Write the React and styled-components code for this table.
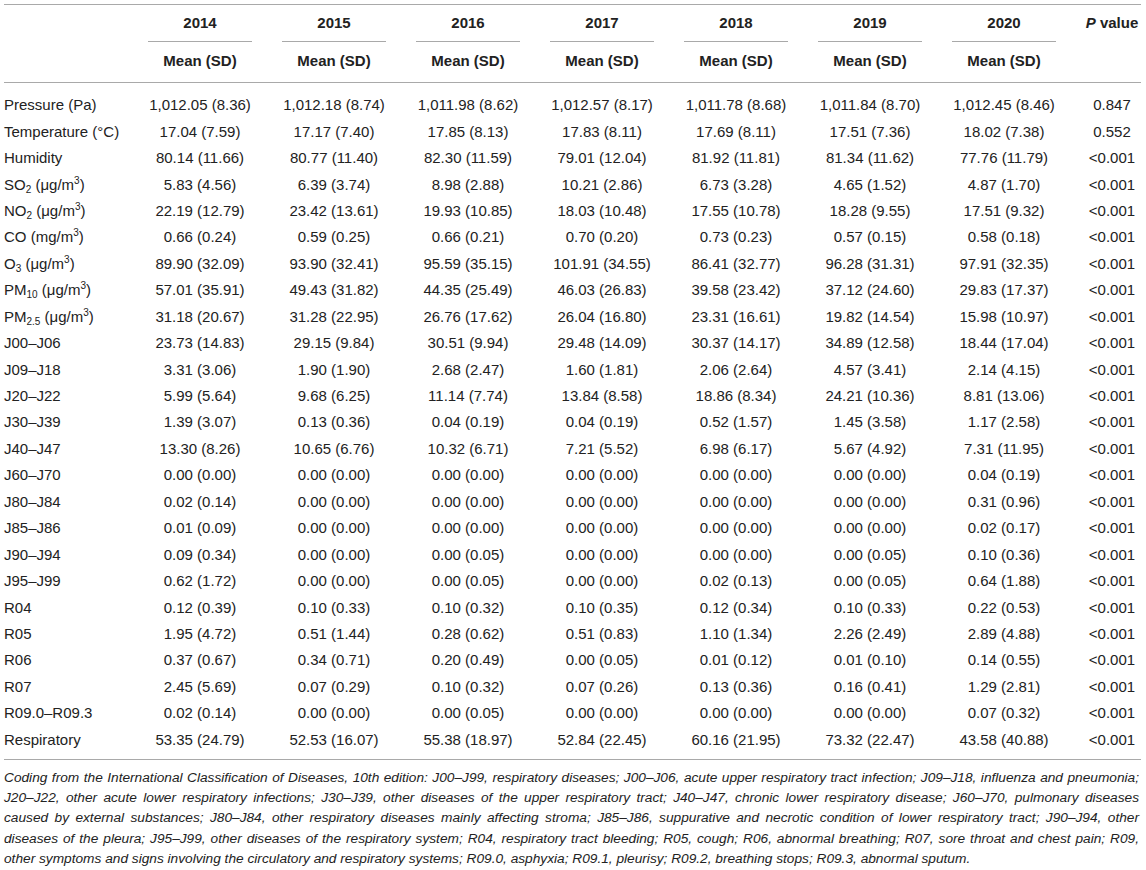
import React from "react";
import styled, { createGlobalStyle } from "styled-components";

const Global = createGlobalStyle`
  html, body { margin: 0; padding: 0; background: #fff; }
  body { font-family: "Liberation Sans", Arial, sans-serif; color: #222; }
`;

const COLS = "129px repeat(7, 134px) 70px";
const LINE = "#a9a9a9";

const Page = styled.div`
  padding: 4px 5px 0 4px;
  width: 1137px;
`;

const Table = styled.div`
  border-top: 1px solid ${LINE};
  border-bottom: 1px solid ${LINE};
`;

const Head = styled.div`
  display: grid;
  grid-template-columns: ${COLS};
  border-bottom: 1px solid ${LINE};
  font-weight: bold;
  font-size: 15px;
  line-height: 18px;
`;

const YearGroup = styled.div`
  display: flex;
  flex-direction: column;
  text-align: center;
`;

const YearLabel = styled.div`
  margin: 0 15px;
  padding: 9px 0;
  border-bottom: 1px solid ${LINE};
`;

const SubLabel = styled.div`
  padding: 10px 0 12px;
`;

const PHead = styled.div`
  padding: 9px 0 0 12px;
  text-align: center;
  white-space: nowrap;
  em { font-style: italic; }
`;

const Body = styled.div`
  padding: 9px 0 6px;
`;

const Row = styled.div`
  display: grid;
  grid-template-columns: ${COLS};
  height: 26.45px;
  align-items: center;
  font-size: 15px;
  line-height: 18px;
`;

const Label = styled.div`
  white-space: nowrap;
  sub {
    font-size: 10px;
    vertical-align: -3px;
    line-height: 0;
  }
  sup {
    font-size: 10px;
    vertical-align: 6px;
    line-height: 0;
  }
`;

const Cell = styled.div`
  text-align: center;
  white-space: nowrap;
`;

const PCell = styled(Cell)`
  padding-left: 12px;
`;

const Notes = styled.div`
  padding: 8px 2px 0 0;
  font-style: italic;
  font-size: 13.7px;
  line-height: 20.25px;
`;

const NoteLine = styled.div`
  text-align: justify;
  text-align-last: ${(p) => (p.$last ? "left" : "justify")};
  white-space: nowrap;
`;

const ug = <>(μg/m<sup>3</sup>)</>;

const rows = [
  [<>Pressure (Pa)</>, ["1,012.05 (8.36)", "1,012.18 (8.74)", "1,011.98 (8.62)", "1,012.57 (8.17)", "1,011.78 (8.68)", "1,011.84 (8.70)", "1,012.45 (8.46)"], "0.847"],
  [<>Temperature (°C)</>, ["17.04 (7.59)", "17.17 (7.40)", "17.85 (8.13)", "17.83 (8.11)", "17.69 (8.11)", "17.51 (7.36)", "18.02 (7.38)"], "0.552"],
  [<>Humidity</>, ["80.14 (11.66)", "80.77 (11.40)", "82.30 (11.59)", "79.01 (12.04)", "81.92 (11.81)", "81.34 (11.62)", "77.76 (11.79)"], "<0.001"],
  [<>SO<sub>2</sub> {ug}</>, ["5.83 (4.56)", "6.39 (3.74)", "8.98 (2.88)", "10.21 (2.86)", "6.73 (3.28)", "4.65 (1.52)", "4.87 (1.70)"], "<0.001"],
  [<>NO<sub>2</sub> {ug}</>, ["22.19 (12.79)", "23.42 (13.61)", "19.93 (10.85)", "18.03 (10.48)", "17.55 (10.78)", "18.28 (9.55)", "17.51 (9.32)"], "<0.001"],
  [<>CO (mg/m<sup>3</sup>)</>, ["0.66 (0.24)", "0.59 (0.25)", "0.66 (0.21)", "0.70 (0.20)", "0.73 (0.23)", "0.57 (0.15)", "0.58 (0.18)"], "<0.001"],
  [<>O<sub>3</sub> {ug}</>, ["89.90 (32.09)", "93.90 (32.41)", "95.59 (35.15)", "101.91 (34.55)", "86.41 (32.77)", "96.28 (31.31)", "97.91 (32.35)"], "<0.001"],
  [<>PM<sub>10</sub> {ug}</>, ["57.01 (35.91)", "49.43 (31.82)", "44.35 (25.49)", "46.03 (26.83)", "39.58 (23.42)", "37.12 (24.60)", "29.83 (17.37)"], "<0.001"],
  [<>PM<sub>2.5</sub> {ug}</>, ["31.18 (20.67)", "31.28 (22.95)", "26.76 (17.62)", "26.04 (16.80)", "23.31 (16.61)", "19.82 (14.54)", "15.98 (10.97)"], "<0.001"],
  [<>J00–J06</>, ["23.73 (14.83)", "29.15 (9.84)", "30.51 (9.94)", "29.48 (14.09)", "30.37 (14.17)", "34.89 (12.58)", "18.44 (17.04)"], "<0.001"],
  [<>J09–J18</>, ["3.31 (3.06)", "1.90 (1.90)", "2.68 (2.47)", "1.60 (1.81)", "2.06 (2.64)", "4.57 (3.41)", "2.14 (4.15)"], "<0.001"],
  [<>J20–J22</>, ["5.99 (5.64)", "9.68 (6.25)", "11.14 (7.74)", "13.84 (8.58)", "18.86 (8.34)", "24.21 (10.36)", "8.81 (13.06)"], "<0.001"],
  [<>J30–J39</>, ["1.39 (3.07)", "0.13 (0.36)", "0.04 (0.19)", "0.04 (0.19)", "0.52 (1.57)", "1.45 (3.58)", "1.17 (2.58)"], "<0.001"],
  [<>J40–J47</>, ["13.30 (8.26)", "10.65 (6.76)", "10.32 (6.71)", "7.21 (5.52)", "6.98 (6.17)", "5.67 (4.92)", "7.31 (11.95)"], "<0.001"],
  [<>J60–J70</>, ["0.00 (0.00)", "0.00 (0.00)", "0.00 (0.00)", "0.00 (0.00)", "0.00 (0.00)", "0.00 (0.00)", "0.04 (0.19)"], "<0.001"],
  [<>J80–J84</>, ["0.02 (0.14)", "0.00 (0.00)", "0.00 (0.00)", "0.00 (0.00)", "0.00 (0.00)", "0.00 (0.00)", "0.31 (0.96)"], "<0.001"],
  [<>J85–J86</>, ["0.01 (0.09)", "0.00 (0.00)", "0.00 (0.00)", "0.00 (0.00)", "0.00 (0.00)", "0.00 (0.00)", "0.02 (0.17)"], "<0.001"],
  [<>J90–J94</>, ["0.09 (0.34)", "0.00 (0.00)", "0.00 (0.05)", "0.00 (0.00)", "0.00 (0.00)", "0.00 (0.05)", "0.10 (0.36)"], "<0.001"],
  [<>J95–J99</>, ["0.62 (1.72)", "0.00 (0.00)", "0.00 (0.05)", "0.00 (0.00)", "0.02 (0.13)", "0.00 (0.05)", "0.64 (1.88)"], "<0.001"],
  [<>R04</>, ["0.12 (0.39)", "0.10 (0.33)", "0.10 (0.32)", "0.10 (0.35)", "0.12 (0.34)", "0.10 (0.33)", "0.22 (0.53)"], "<0.001"],
  [<>R05</>, ["1.95 (4.72)", "0.51 (1.44)", "0.28 (0.62)", "0.51 (0.83)", "1.10 (1.34)", "2.26 (2.49)", "2.89 (4.88)"], "<0.001"],
  [<>R06</>, ["0.37 (0.67)", "0.34 (0.71)", "0.20 (0.49)", "0.00 (0.05)", "0.01 (0.12)", "0.01 (0.10)", "0.14 (0.55)"], "<0.001"],
  [<>R07</>, ["2.45 (5.69)", "0.07 (0.29)", "0.10 (0.32)", "0.07 (0.26)", "0.13 (0.36)", "0.16 (0.41)", "1.29 (2.81)"], "<0.001"],
  [<>R09.0–R09.3</>, ["0.02 (0.14)", "0.00 (0.00)", "0.00 (0.05)", "0.00 (0.00)", "0.00 (0.00)", "0.00 (0.00)", "0.07 (0.32)"], "<0.001"],
  [<>Respiratory</>, ["53.35 (24.79)", "52.53 (16.07)", "55.38 (18.97)", "52.84 (22.45)", "60.16 (21.95)", "73.32 (22.47)", "43.58 (40.88)"], "<0.001"],
];

const years = ["2014", "2015", "2016", "2017", "2018", "2019", "2020"];

const notes = [
  "Coding from the International Classification of Diseases, 10th edition: J00–J99, respiratory diseases; J00–J06, acute upper respiratory tract infection; J09–J18, influenza and pneumonia;",
  "J20–J22, other acute lower respiratory infections; J30–J39, other diseases of the upper respiratory tract; J40–J47, chronic lower respiratory disease; J60–J70, pulmonary diseases",
  "caused by external substances; J80–J84, other respiratory diseases mainly affecting stroma; J85–J86, suppurative and necrotic condition of lower respiratory tract; J90–J94, other",
  "diseases of the pleura; J95–J99, other diseases of the respiratory system; R04, respiratory tract bleeding; R05, cough; R06, abnormal breathing; R07, sore throat and chest pain; R09,",
  "other symptoms and signs involving the circulatory and respiratory systems; R09.0, asphyxia; R09.1, pleurisy; R09.2, breathing stops; R09.3, abnormal sputum.",
];

export default function App() {
  return (
    <Page>
      <Global />
      <Table>
        <Head>
          <div />
          {years.map((y) => (
            <YearGroup key={y}>
              <YearLabel>{y}</YearLabel>
              <SubLabel>Mean (SD)</SubLabel>
            </YearGroup>
          ))}
          <PHead>
            <em>P</em> value
          </PHead>
        </Head>
        <Body>
          {rows.map(([label, vals, p], i) => (
            <Row key={i}>
              <Label>{label}</Label>
              {vals.map((v, j) => (
                <Cell key={j}>{v}</Cell>
              ))}
              <PCell>{p}</PCell>
            </Row>
          ))}
        </Body>
      </Table>
      <Notes>
        {notes.map((n, i) => (
          <NoteLine key={i} $last={i === notes.length - 1}>
            {n}
          </NoteLine>
        ))}
      </Notes>
    </Page>
  );
}
